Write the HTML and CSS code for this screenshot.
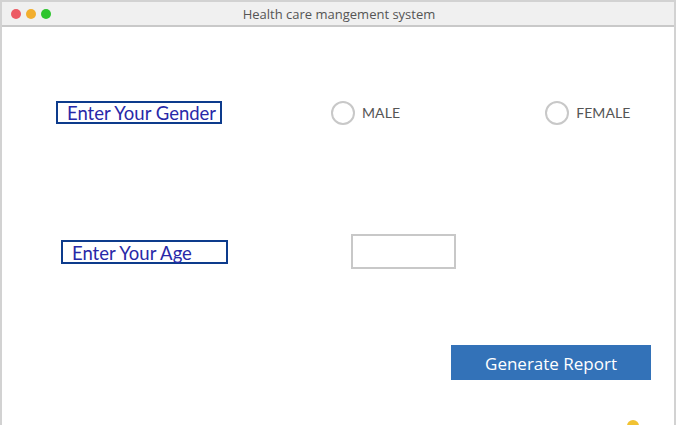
FILE: index.html
```html
<!DOCTYPE html>
<html>
<head>
<meta charset="utf-8">
<link rel="stylesheet" href="styles.css">
</head>
<body>
<div class="window">
  <div class="titlebar">
    <div class="dots">
      <span class="dot red"></span>
      <span class="dot orange"></span>
      <span class="dot green"></span>
    </div>
    <div class="title">Health care mangement system</div>
  </div>
  <div class="content">
    <div class="row row-gender">
      <div class="label label-gender">Enter Your Gender</div>
      <label class="radio radio-male"><span class="circle"></span><span class="rtext">MALE</span></label>
      <label class="radio radio-female"><span class="circle"></span><span class="rtext">FEMALE</span></label>
    </div>
    <div class="row row-age">
      <div class="label label-age">Enter Your Age</div>
      <div class="input"></div>
    </div>
    <div class="row row-btn">
      <div class="button">Generate Report</div>
    </div>
    <span class="ydot"></span>
  </div>
</div>
</body>
</html>
```

FILE: styles.css
```css
html, body {
  margin: 0;
  padding: 0;
  background: #ffffff;
  width: 681px;
  height: 425px;
  overflow: hidden;
}
.window {
  width: 672px;
  height: 423px;
  border: 2px solid #d2d2d2;
  border-bottom: none;
  background: #fff;
  position: relative;
}
.titlebar {
  height: 23px;
  background: #f0f0f0;
  border-bottom: 2px solid #c9c9c9;
  position: relative;
  display: flex;
  align-items: center;
}
.dots {
  display: flex;
  gap: 5px;
  padding-left: 9px;
}
.dot {
  width: 10px;
  height: 10px;
  border-radius: 50%;
  display: block;
}
.red { background: #ec5a64; }
.orange { background: #f2ae2e; }
.green { background: #2ec52e; }
.title {
  position: absolute;
  left: 0;
  right: 0;
  top: 4px;
  text-align: center;
  font-family: "Open Sans", sans-serif;
  font-size: 13px;
  color: #555;
  line-height: 16px;
  padding-left: 2px;
}
.content {
  position: relative;
  height: 396px;
  font-family: Lato, sans-serif;
}
.row {
  display: flex;
  align-items: center;
}
.label {
  box-sizing: border-box;
  border: 2px solid #0d3b8c;
  color: #2828a8;
  font-size: 18.5px;
  line-height: 20px;
  padding-left: 9px;
  white-space: nowrap;
}
.row-gender {
  padding-top: 73px;
  padding-left: 54px;
  height: 25px;
}
.label-gender {
  width: 166px;
  height: 23px;
  line-height: 21px;
}
.radio {
  display: flex;
  align-items: center;
}
.circle {
  box-sizing: border-box;
  width: 24px;
  height: 24px;
  border: 2px solid #c8c8c8;
  border-radius: 50%;
  display: block;
}
.rtext {
  margin-left: 7px;
  font-size: 14px;
  color: #555;
  letter-spacing: 0.1px;
}
.radio-male {
  margin-left: 109px;
}
.radio-female {
  margin-left: 145px;
}
.row-age {
  padding-top: 109px;
  padding-left: 59px;
}
.label-age {
  width: 167px;
  height: 24px;
  line-height: 22px;
}
.input {
  box-sizing: border-box;
  width: 105px;
  height: 35px;
  border: 2px solid #c8c8c8;
  margin-left: 123px;
}
.row-btn {
  padding-top: 76px;
  padding-left: 449px;
}
.button {
  width: 200px;
  height: 35px;
  background: #3372b8;
  color: #fff;
  font-family: "Open Sans", sans-serif;
  font-size: 17px;
  line-height: 37px;
  text-align: center;
}
.ydot {
  position: absolute;
  left: 625px;
  top: 393px;
  width: 12px;
  height: 12px;
  border-radius: 50%;
  background: #f1c232;
}
```
